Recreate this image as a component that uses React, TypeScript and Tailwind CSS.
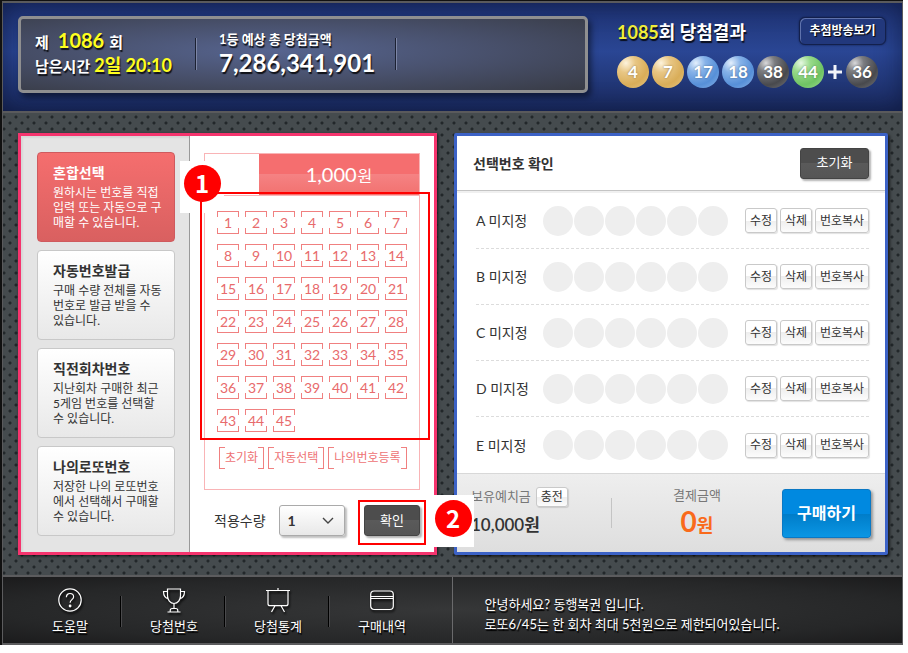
import { useState } from 'react';
import type { ReactNode } from 'react';
import clsx from 'clsx';

type BallColor = 'yellow' | 'blue' | 'gray' | 'green';

const BALL_STYLES: Record<BallColor, string> = {
  yellow: 'bg-[radial-gradient(circle_at_28%_22%,#fdf3dc_0%,#e8c684_28%,#d9ad58_65%,#e6c685_100%)]',
  blue: 'bg-[radial-gradient(circle_at_28%_22%,#e3effc_0%,#86b2e8_28%,#568fd8_65%,#8ab4e8_100%)]',
  gray: 'bg-[radial-gradient(circle_at_28%_22%,#d8d8da_0%,#7b7c80_26%,#48494d_65%,#77787c_100%)]',
  green: 'bg-[radial-gradient(circle_at_28%_22%,#e6f8e2_0%,#98da8a_28%,#6fc463_65%,#9fdc92_100%)]',
};

const WINNING: { value: number; color: BallColor }[] = [
  { value: 4, color: 'yellow' },
  { value: 7, color: 'yellow' },
  { value: 17, color: 'blue' },
  { value: 18, color: 'blue' },
  { value: 38, color: 'gray' },
  { value: 44, color: 'green' },
];

const MODES = [
  { title: '혼합선택', lines: ['원하시는 번호를 직접', '입력 또는 자동으로 구', '매할 수 있습니다.'] },
  { title: '자동번호발급', lines: ['구매 수량 전체를 자동', '번호로 발급 받을 수', '있습니다.'] },
  { title: '직전회차번호', lines: ['지난회차 구매한 최근', '5게임 번호를 선택할', '수 있습니다.'] },
  { title: '나의로또번호', lines: ['저장한 나의 로또번호', '에서 선택해서 구매할', '수 있습니다.'] },
];

const NUMBERS = Array.from({ length: 45 }, (_, i) => i + 1);
const GAMES = ['A', 'B', 'C', 'D', 'E'];

const TEXT_SHADOW = '[text-shadow:1px_2px_1px_rgba(0,0,0,0.8)]';

function Ball({ value, color }: { value: number; color: BallColor }) {
  return (
    <span
      className={clsx(
        'flex size-8 shrink-0 items-center justify-center rounded-full text-[17px] font-bold text-white',
        '[text-shadow:0_0_2px_rgba(0,0,0,0.4)]',
        BALL_STYLES[color],
      )}
    >
      {value}
    </span>
  );
}

function Separator() {
  return <span className="mt-[7px] block h-8 w-[2px] shrink-0 border-l border-[#1c2132] bg-[#7d86a6]" />;
}

function Header() {
  return (
    <header className="flex items-start border border-t-2 border-b-2 border-[#5a5a5c] bg-[linear-gradient(#1e3272,#2a4694_45%,#1a2a5e)] pt-[13px] pr-4 pb-[18px] pl-[15px] text-white shadow-[inset_0_0_24px_rgba(8,16,48,0.6)]">
      <div className="flex h-[77px] w-[570px] shrink-0 items-start rounded-[5px] border-[3px] border-[#8f8f90] bg-[radial-gradient(ellipse_at_45%_45%,#56648f_0%,#48506b_50%,#383b45_100%)] pt-3 pl-[14px] shadow-[3px_4px_6px_rgba(0,0,0,0.5)]">
        <div className={clsx('w-[160px] text-[15px] font-bold', TEXT_SHADOW)}>
          <p className="flex items-baseline leading-[18px]">
            제<span className="mr-[5px] ml-[9px] text-[20px] text-[#ffff1e]">1086</span>회
          </p>
          <p className="flex items-baseline whitespace-pre leading-7">
            남은시간<span className="ml-1 text-[18px] text-[#ffff1e]">2일 20:10</span>
          </p>
        </div>
        <Separator />
        <div className={clsx('ml-[22px] w-[176px] font-bold', TEXT_SHADOW)}>
          <p className="text-[13px] leading-4">1등 예상 총 당첨금액</p>
          <p className="text-[24px] leading-8">7,286,341,901</p>
        </div>
        <Separator />
      </div>

      <div className="ml-[29px] flex-1">
        <div className="flex items-start justify-between">
          <h2 className={clsx('pt-1 text-[18px] font-bold leading-6', TEXT_SHADOW)}>
            <span className="text-[#f0ee38]">1085</span>회 당첨결과
          </h2>
          <button
            type="button"
            className="mt-px h-7 w-[87px] rounded-md border border-[#13204c] bg-[#22387c] text-[12px] font-bold shadow-[inset_1px_1px_0_#5f72ac,0_0_2px_#0e1a40] [text-shadow:1px_1px_1px_#000]"
          >
            추첨방송보기
          </button>
        </div>
        <div className="mt-[11px] flex items-center gap-[3px]">
          {WINNING.map((ball) => (
            <Ball key={ball.value} {...ball} />
          ))}
          <svg viewBox="0 0 16 16" className="size-4 shrink-0" fill="none" stroke="#f2f4fa" strokeWidth="3" aria-hidden="true">
            <path d="M8 1v14M1 8h14" />
          </svg>
          <Ball value={36} color="gray" />
        </div>
      </div>
    </header>
  );
}

// numbered red marker on a white plate
function Marker({ children, className }: { children: ReactNode; className: string }) {
  return (
    <span className={clsx('absolute z-20 flex h-[52px] w-[42px] items-center justify-center', className)}>
      <span className="mb-[6px] flex size-[37px] shrink-0 items-center justify-center rounded-full bg-[#ff0000] font-['Noto_Sans_CJK_KR',sans-serif] text-[24px] font-bold leading-none text-white">
        {children}
      </span>
    </span>
  );
}

function NumberCell({ value, selected, onClick }: { value: number; selected: boolean; onClick: () => void }) {
  return (
    <button
      type="button"
      onClick={onClick}
      aria-pressed={selected}
      className={clsx(
        'relative h-[23px] w-[22px] border border-[#f08080] text-[14px] leading-none text-[#e86a6c]',
        'before:absolute before:inset-x-[-1px] before:top-[5px] before:bottom-[5px] before:bg-white',
        selected && 'font-bold',
      )}
    >
      <span className="relative">{value}</span>
    </button>
  );
}

function BracketButton({ children }: { children: ReactNode }) {
  return (
    <button
      type="button"
      className="relative h-[22px] border border-[#f08080] px-[5px] text-[12px] leading-none text-[#ee7274] before:absolute before:inset-x-[5px] before:inset-y-[-1px] before:bg-white"
    >
      <span className="relative">{children}</span>
    </button>
  );
}

function DarkButton({ children, className }: { children: ReactNode; className: string }) {
  return (
    <button
      type="button"
      className={clsx(
        'rounded-[3px] border border-[#444] bg-[linear-gradient(#4d4d4d_50%,#5a5a5a_50%,#555)] text-[13px] text-white shadow-[2px_2px_2px_rgba(0,0,0,0.3)]',
        className,
      )}
    >
      {children}
    </button>
  );
}

function SmallButton({ children, className }: { children: ReactNode; className: string }) {
  return (
    <button
      type="button"
      className={clsx(
        'shrink-0 rounded-[3px] border border-[#c9c9c9] bg-[linear-gradient(#fff_50%,#eee_50%,#fcfcfc)] text-[12px] leading-none text-[#333] shadow-[1px_1px_1px_rgba(0,0,0,0.12)]',
        className,
      )}
    >
      {children}
    </button>
  );
}

function PickPanel() {
  const [mode, setMode] = useState(0);
  const [picked, setPicked] = useState<number[]>([]);

  const toggle = (n: number) => {
    setPicked((prev) => (prev.includes(n) ? prev.filter((p) => p !== n) : [...prev, n]));
  };

  return (
    <section className="relative flex border-[3px] border-[#f5346e] bg-white shadow-[1px_1px_3px_rgba(0,0,0,0.7)]">
      <div className="flex w-[169px] shrink-0 flex-col gap-2 border-r border-[#999] bg-[#e4e4e4] py-4 pl-4 shadow-[inset_2px_2px_2px_rgba(0,0,0,0.06)]">
        {MODES.map((item, i) => (
          <button
            key={item.title}
            type="button"
            onClick={() => setMode(i)}
            className={clsx(
              'h-[90px] w-[138px] rounded-[4px] border pb-1 pl-[15px] text-left',
              mode === i
                ? 'border-[#cf5a5e] bg-[linear-gradient(#f56e6e,#d96060)] text-white'
                : 'border-[#c8c8c8] bg-[linear-gradient(#fff,#e8e8e8)] text-[#333]',
            )}
          >
            <strong className="block text-[14px] leading-6">{item.title}</strong>
            <span className="block text-[12px] leading-[15px] whitespace-nowrap">
              {item.lines.map((line) => (
                <span key={line} className="block">
                  {line}
                </span>
              ))}
            </span>
          </button>
        ))}
      </div>

      <div className="min-w-0 flex-1 pt-[17px] pr-[14px] pl-[14px]">
        <div className="relative h-[337px] border border-[#f9b4b6]">
          <div className="flex h-[42px] border-b border-[#f9b4b6]">
            <div className="ml-[54px] flex flex-1 items-baseline justify-center bg-[linear-gradient(#f56e6f_50%,#f58283_50%,#f2716f)] text-[20px] leading-10 text-white">
              1,000<span className="ml-px text-[16px]">원</span>
            </div>
          </div>
          <span className="absolute top-[7px] left-[-25px] h-[52px] w-[44px] bg-white" />
          <div className="relative ml-3 grid grid-cols-[repeat(7,22px)] gap-x-[6px] gap-y-[10px] pt-[15px]">
            {NUMBERS.map((n) => (
              <NumberCell key={n} value={n} selected={picked.includes(n)} onClick={() => toggle(n)} />
            ))}
          </div>
          <div className="mt-[15px] ml-[14px] flex gap-1">
            <BracketButton>초기화</BracketButton>
            <BracketButton>자동선택</BracketButton>
            <BracketButton>나의번호등록</BracketButton>
          </div>
          <span className="pointer-events-none absolute top-[38px] right-[-11px] left-[-5px] h-[248px] border-2 border-[#ff0000]" />
          <Marker className="top-[6px] left-[-24px]">1</Marker>
        </div>

        <div className="mt-[15px] flex h-[31px] items-center pl-[10px] text-[14px] text-[#333]">
          <label htmlFor="amount">적용수량</label>
          <span className="relative ml-[13px] block">
            <select
              id="amount"
              defaultValue="1"
              className="block h-[31px] w-[66px] appearance-none rounded-[3px] border border-[#aaa] bg-[linear-gradient(#fff,#e8e8e8)] pl-2 text-[14px] font-bold shadow-[2px_2px_2px_rgba(0,0,0,0.25)]"
            >
              <option>1</option>
              <option>2</option>
              <option>3</option>
              <option>4</option>
              <option>5</option>
            </select>
            <svg viewBox="0 0 12 7" className="pointer-events-none absolute top-3 right-[11px] h-[7px] w-3" fill="none" stroke="#444" strokeWidth="1.4" aria-hidden="true">
              <path d="M1 1l5 5 5-5" />
            </svg>
          </span>
          <span className="relative ml-auto block">
            <DarkButton className="block h-[31px] w-14">확인</DarkButton>
            <span className="pointer-events-none absolute top-[-5px] right-[-6px] bottom-[-9px] left-[-6px] border-2 border-[#ff0000]" />
          </span>
        </div>
      </div>

      <Marker className="right-[-40px] bottom-[5px] bg-white">2</Marker>
    </section>
  );
}

function GameList() {
  return (
    <section className="flex flex-col rounded-[2px] border-[3px] border-[#3c62c6] bg-white text-[#333] shadow-[2px_2px_3px_rgba(0,0,0,0.6)]">
      <div className="flex h-[55px] items-center justify-between border-b border-[#c4c4c4] pr-4 pl-4 shadow-[0_2px_0_#f0f0f0]">
        <h2 className="text-[14px] font-bold">선택번호 확인</h2>
        <DarkButton className="h-[31px] w-[69px]">초기화</DarkButton>
      </div>

      <ul className="flex-1 pt-[2px] pr-4 pl-[19px]">
        {GAMES.map((game) => (
          <li key={game} className="flex h-14 items-center border-b border-dashed border-[#dcdcdc] last:border-b-0">
            <span className="w-[67px] shrink-0 text-[14px]">{game} 미지정</span>
            <span className="flex gap-px">
              {[0, 1, 2, 3, 4, 5].map((slot) => (
                <span key={slot} className="size-[30px] shrink-0 rounded-full bg-[#eee]" />
              ))}
            </span>
            <span className="ml-auto flex gap-[3px]">
              <SmallButton className="h-[25px] w-8">수정</SmallButton>
              <SmallButton className="h-[25px] w-8">삭제</SmallButton>
              <SmallButton className="h-[25px] w-[54px]">번호복사</SmallButton>
            </span>
          </li>
        ))}
      </ul>

      <div className="flex h-[79px] items-center border-t border-[#d8d8d8] bg-[linear-gradient(#eee,#dedede)] pr-[14px] pl-[14px]">
        <div className="w-[140px] shrink-0">
          <p className="flex h-6 items-center text-[13px] text-[#777]">
            보유예치금
            <SmallButton className="ml-[5px] h-5 w-8">충전</SmallButton>
          </p>
          <p className="text-[17px] font-semibold leading-8">10,000원</p>
        </div>
        <span className="h-[30px] w-px shrink-0 bg-[#c4c4c4]" />
        <div className="flex-1 text-center">
          <p className="text-[13px] leading-5 text-[#777]">결제금액</p>
          <p className="text-[18px] font-bold leading-8 text-[#f96a1b]">
            <span className="text-[28px]">0</span>원
          </p>
        </div>
        <button
          type="button"
          className="h-[49px] w-[89px] shrink-0 rounded-[3px] border border-[#0a78c4] bg-[linear-gradient(#0089e0_50%,#007cc8_50%,#0a96e4)] text-[16px] font-bold text-white shadow-[2px_2px_3px_rgba(0,0,0,0.35)]"
        >
          구매하기
        </button>
      </div>
    </section>
  );
}

function HelpIcon() {
  return (
    <>
      <circle cx="12" cy="12" r="11.2" />
      <path d="M8.4 9.2c0-2.200 1.500-3.700 3.600-3.700s3.600 1.400 3.600 3.400c0 2.700-3.500 2.800-3.500 5.800" />
      <circle cx="12.100" cy="18" r="0.800" fill="#fff" />
    </>
  );
}

function TrophyIcon() {
  return (
    <path d="M5.5 1h13v6.5c0 4.500-2.600 8-6.500 8s-6.500-3.500-6.500-8zM5.500 3.500h-4c0 4 1.600 6.600 5 7.200M18.500 3.500h4c0 4-1.600 6.600-5 7.200M12 15.500v5M8.200 24v-1.600c0-1.200.9-1.900 2-1.900h3.600c1.100 0 2 .7 2 1.900V24M5.500 24h13" />
  );
}

function BoardIcon() {
  return <path d="M0 2.500h24M12 0v2.500M2 2.500v13.200c0 1.300.8 2 2 2h16c1.200 0 2-.7 2-2V2.500M9 17.700L5.500 24M15 17.700l3.500 6.300" />;
}

function CardIcon() {
  return (
    <>
      <rect x="0.7" y="3" width="22.6" height="18.5" rx="3.5" />
      <path d="M.7 8.500h22.600M.7 10.500h22.600" />
    </>
  );
}

const MENU = [
  { label: '도움말', icon: <HelpIcon /> },
  { label: '당첨번호', icon: <TrophyIcon /> },
  { label: '당첨통계', icon: <BoardIcon /> },
  { label: '구매내역', icon: <CardIcon /> },
];

function Footer() {
  return (
    <footer className="grid grid-cols-2 border border-t-2 border-b-2 border-[#5c5c5e] bg-[radial-gradient(ellipse_at_center,#363738,#262728_70%,#1b1b1c)] text-[13px] text-white [text-shadow:1px_2px_1px_#000]">
      <nav className="flex border-r border-[#6a6a6c] pl-[15px]">
        {MENU.map((item) => (
          <a
            key={item.label}
            href="#"
            className="relative flex h-[66px] w-[104px] flex-col items-center pt-[10px] before:absolute before:top-[19px] before:right-0 before:h-[31px] before:w-[2px] before:border-l before:border-black before:bg-[#4a4a4c] last:before:hidden"
          >
            <svg viewBox="-1 -1 26 26" className="size-[26px] drop-shadow-[1px_2px_1px_#000]" fill="none" stroke="#fff" strokeWidth="1.2" aria-hidden="true">
              {item.icon}
            </svg>
            <span className="leading-[26px]">{item.label}</span>
          </a>
        ))}
      </nav>
      <p className="pt-[17px] pl-8 leading-5">
        안녕하세요? 동행복권 입니다.
        <br />
        로또6/45는 한 회차 최대 5천원으로 제한되어있습니다.
      </p>
    </footer>
  );
}

export default function App() {
  return (
    <div className="min-w-[903px] bg-white pr-[5px] font-['Lato','Noto_Sans_CJK_KR',sans-serif]">
      <div className="border-t border-l-2 border-[#111]">
        <Header />
        <main className="grid grid-cols-[419fr_434fr] gap-[17px] border-x border-[#5a5a5c] bg-[#454b4e] bg-[radial-gradient(circle,#22272a_1px,transparent_2px),radial-gradient(circle,#22272a_1px,transparent_2px)] bg-[size:12px_12px] bg-[position:7px_10px,1px_4px] pt-5 pr-[14px] pb-5 pl-[15px]">
          <PickPanel />
          <GameList />
        </main>
        <Footer />
      </div>
    </div>
  );
}
